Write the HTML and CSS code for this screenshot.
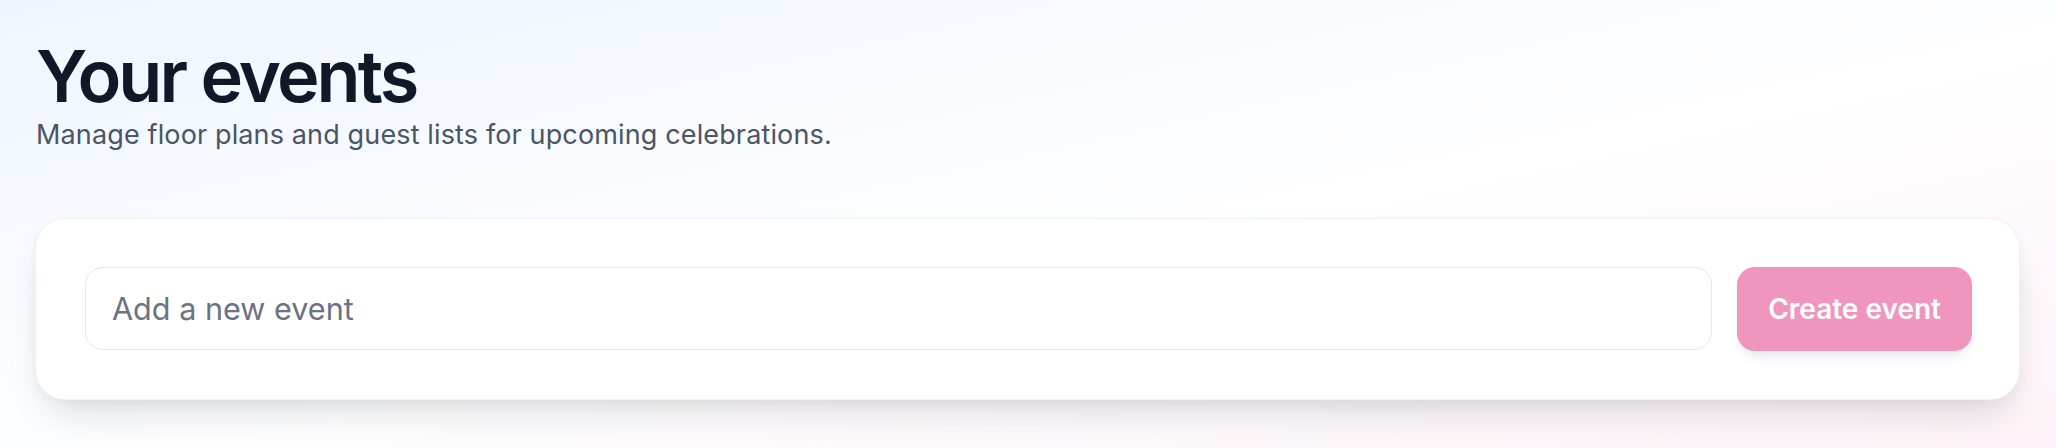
FILE: index.html
```html
<!DOCTYPE html>
<html lang="en">
<head>
<meta charset="utf-8">
<title>Your events</title>
<link rel="stylesheet" href="styles.css">
</head>
<body>
<main class="page">
  <header class="header">
    <h1 class="title">Your events</h1>
    <p class="subtitle">Manage floor plans and guest lists for upcoming celebrations.</p>
  </header>
  <section class="card">
    <form class="form">
      <input class="input" type="text" placeholder="Add a new event">
      <button class="button" type="button">Create event</button>
    </form>
  </section>
</main>
</body>
</html>
```

FILE: styles.css
```css
* { box-sizing: border-box; }
html, body { margin: 0; padding: 0; }
body {
  min-height: 100vh;
  font-family: Inter, "Noto Sans", "Liberation Sans", sans-serif;
  background: linear-gradient(to bottom right, #eff5ff 0%, #ffffff 55%, #fdf3f8 100%);
}
.page {
  padding: 40px 36px 40px 35px;
}
.header { padding-left: 1px; }
.title {
  margin: 0;
  font-size: 72px;
  line-height: 72px;
  font-weight: 600;
  letter-spacing: -0.04em;
  color: #111827;
}
.subtitle {
  margin: 3px 0 0;
  font-size: 27px;
  line-height: 40px;
  letter-spacing: 0.005em;
  color: #4b5563;
}
.card {
  margin-top: 63px;
  background: #ffffff;
  border: 1px solid rgba(226, 232, 240, 0.6);
  border-radius: 30px;
  padding: 48px 47px 48px 49px;
  box-shadow: 0 24px 40px -14px rgba(15, 23, 42, 0.15), 0 4px 14px rgba(15, 23, 42, 0.04);
}
.form {
  display: flex;
  gap: 25px;
  align-items: stretch;
}
.input {
  flex: 1;
  height: 83px;
  border: 1.5px solid #e3e6ea;
  border-radius: 18px;
  padding: 0 26px;
  font-family: inherit;
  font-size: 30.6px;
  color: #111827;
  background: #ffffff;
  outline: none;
}
.input::placeholder { color: #6b7280; }
.button {
  height: 84px;
  padding: 0 31px;
  border: none;
  border-radius: 18px;
  background: #f095bd;
  color: #ffffff;
  font-family: inherit;
  font-size: 28px;
  font-weight: 600;
  box-shadow: 0 8px 14px -6px rgba(15, 23, 42, 0.16);
  cursor: pointer;
}
```
